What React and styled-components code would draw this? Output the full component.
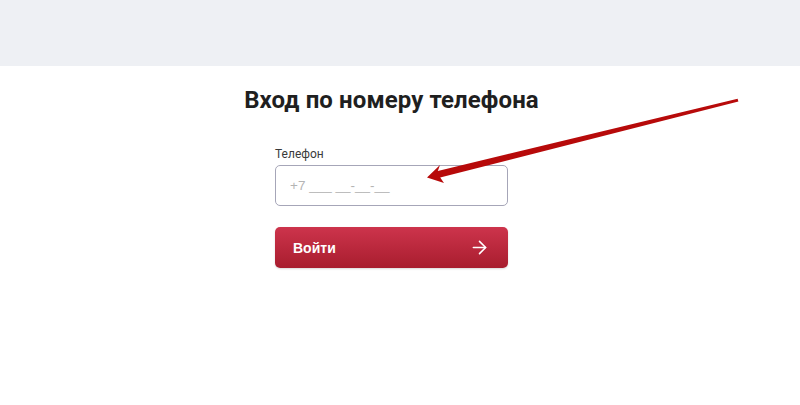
import React, { useState } from "react";
import styled, { createGlobalStyle } from "styled-components";
import { ArrowRight } from "lucide-react";

const GlobalStyle = createGlobalStyle`
  html, body {
    margin: 0;
    padding: 0;
    background: #ffffff;
    font-family: Roboto, "Liberation Sans", Arial, sans-serif;
  }
`;

const Page = styled.div`
  position: relative;
  width: 800px;
  height: 405px;
  overflow: hidden;
`;
const TopBar = styled.div`
  height: 66px;
  background-color: #eef0f4;
`;
const Main = styled.div`
  width: 783px;
  display: flex;
  flex-direction: column;
  align-items: center;
  padding-top: 20px;
`;
const Title = styled.h1`
  margin: 0;
  font-size: 24px;
  line-height: 28px;
  font-weight: 700;
  color: #1f1f1f;
  letter-spacing: 0.1px;
`;
const Form = styled.form`
  width: 233px;
  margin-top: 33px;
  display: flex;
  flex-direction: column;
`;
const Label = styled.label`
  font-size: 12px;
  line-height: 14px;
  color: #3a3a3a;
  margin-bottom: 4px;
`;
const PhoneInput = styled.input`
  height: 41px;
  box-sizing: border-box;
  border: 1px solid #a6a6b8;
  border-radius: 5px;
  padding: 0 14px;
  font-family: "Liberation Sans", Arial, sans-serif;
  font-size: 13.5px;
  color: #333;
  outline: none;
  &::placeholder {
    color: #b4b4b4;
  }
`;
const SubmitButton = styled.button`
  margin-top: 21px;
  height: 41px;
  border: none;
  border-radius: 5px;
  padding: 0 18px 0 18px;
  display: flex;
  align-items: center;
  justify-content: space-between;
  background: linear-gradient(180deg, #cd344c 0%, #a81d2e 100%);
  box-shadow: 0 1px 2px rgba(0, 0, 0, 0.15);
  color: #ffffff;
  font-family: "Liberation Sans", Arial, sans-serif;
  font-size: 14px;
  font-weight: 700;
  cursor: pointer;
`;
const Pointer = styled.svg`
  position: absolute;
  left: 0;
  top: 0;
  pointer-events: none;
`;

const LoginPage = () => {
  const [phone, setPhone] = useState("");
  return (
    <Main>
      <Title>Вход по номеру телефона</Title>
      <Form onSubmit={(e) => e.preventDefault()}>
        <Label htmlFor="phone">Телефон</Label>
        <PhoneInput
          id="phone"
          type="tel"
          placeholder="+7 ___ __-__-__"
          value={phone}
          onChange={(e) => setPhone(e.target.value)}
        />
        <SubmitButton type="submit">
          Войти
          <ArrowRight size={21} strokeWidth={1.8} />
        </SubmitButton>
      </Form>
    </Main>
  );
};

const App = () => {
  return (
    <Page>
      <GlobalStyle />
      <TopBar />
      <LoginPage />
      <Pointer width="800" height="405" viewBox="0 0 800 405">
        <polygon
          fill="#b70a0a"
          points="427,177.5 444,183 440.2,177.6 738.4,101.4 737.6,98.8 437.8,171 440,165"
        />
      </Pointer>
    </Page>
  );
};

export default App;
